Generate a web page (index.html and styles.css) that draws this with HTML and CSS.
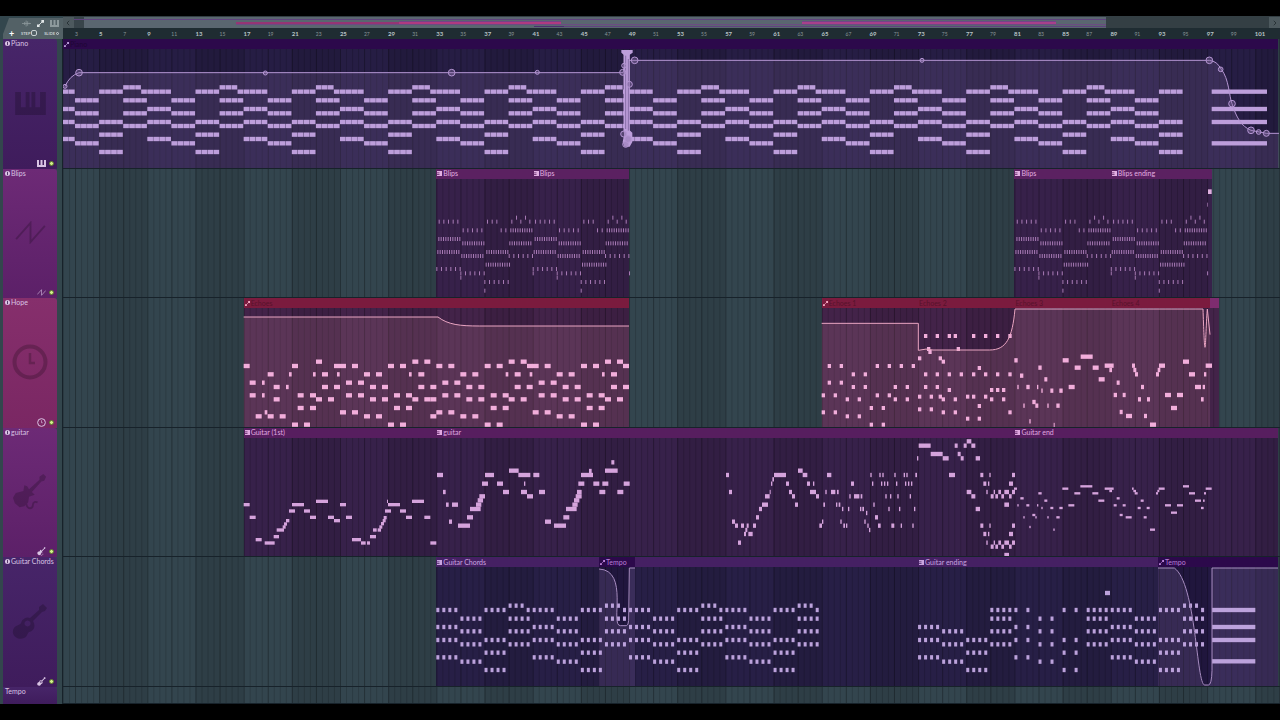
FILE: index.html
```html
<!DOCTYPE html>
<html lang="en">
<head>
  <meta charset="UTF-8">
  <meta name="viewport" content="width=device-width, initial-scale=1.0">
  <title>Playlist</title>
  <link rel="stylesheet" href="styles.css">
</head>
<body>
  <!-- Shared icons -->
  <svg class="icon-defs" aria-hidden="true">
    <symbol id="icon-piano" viewBox="0 0 32 24">
      <path fill="currentColor" d="M0 0h6v16h5V0h4v16h2V0h4v16h5V0h6v24H0z"/>
    </symbol>
    <symbol id="icon-piano-small" viewBox="0 0 9 7">
      <path fill="currentColor" d="M0 0h2v5h1.500V0h2v5H7V0h2v7H0z"/>
    </symbol>
    <symbol id="icon-wave" viewBox="0 0 32 24">
      <path fill="none" stroke="currentColor" stroke-width="2" d="M1 19 16 2v20L31 5"/>
    </symbol>
    <symbol id="icon-clock" viewBox="0 0 36 36">
      <circle cx="18" cy="18" r="15.500" fill="none" stroke="currentColor" stroke-width="4"/>
      <path fill="none" stroke="currentColor" stroke-width="2.500" d="M18 9v10h5"/>
    </symbol>
    <symbol id="icon-electric" viewBox="0 0 36 38">
      <path fill="currentColor" d="M35 3 32 0l-4 3v3L17 16l-2-3-3-1-1 6-8 2-3 5 2 6 5 4 5-1 4-4 1-6 6-2-3-3 10-11 3-1z"/>
      <path fill="none" stroke="currentColor" stroke-width="2" d="M14 31c1 7 7 6 7 2s3-4 5-3"/>
    </symbol>
    <symbol id="icon-acoustic" viewBox="0 0 36 36">
      <path fill="currentColor" fill-rule="evenodd" d="M35 4 31 0l-4 3v3l-9 8a7 7 0 0 0-9 5c-1 2-5 2-7 5-4 6 3 13 10 10 3-1 3-4 5-6 5-1 7-6 4-11l9-9 3-1zM15.500 16.500a3 3 0 1 0 .1 0z"/>
    </symbol>
    <symbol id="icon-link" viewBox="0 0 8 8">
      <path stroke="currentColor" d="M2 6 6 2"/>
      <path fill="currentColor" d="M0 5h3v3H0zM5 0h3v3H5z"/>
    </symbol>
    <symbol id="icon-pattern" viewBox="0 0 7 7">
      <path fill="currentColor" d="M0 0h7v7H0V5.500h3.500v-1H0V3h3.500V2H0z"/>
    </symbol>
    <symbol id="icon-info" viewBox="0 0 6 6">
      <circle cx="3" cy="3" r="3" fill="currentColor"/>
      <path stroke="#3a1a50" d="M3 1v4"/>
    </symbol>
    <symbol id="icon-audio" viewBox="0 0 12 8">
      <path stroke="currentColor" d="M0 4h12M3.500 2v4M5.500 0v8M7.500 1v6M9.500 3v2"/>
    </symbol>
  </svg>

  <main class="playlist">
    <header class="toolbar">
      <div class="corner">
        <div class="tools">
          <button class="tool" aria-label="Audio clips"><svg><use href="#icon-audio"/></svg></button>
          <button class="tool active" aria-label="Automation clips"><svg><use href="#icon-link"/></svg></button>
          <button class="tool" aria-label="Pattern clips"><svg><use href="#icon-piano-small"/></svg></button>
        </div>
        <div class="options">
          <button class="add" aria-label="Add track">+</button>
          <label>STEP<input type="checkbox"></label>
          <label>SLIDE<input type="checkbox" class="dot"></label>
        </div>
      </div>
      <div class="timeline-head">
        <nav class="overview">
          <button class="scroll" aria-label="Scroll left"><svg viewBox="0 0 6 8"><path d="M4 1 1 4l3 3"/></svg></button>
          <div class="minimap"><svg id="minimap"></svg></div>
          <button class="scroll" aria-label="Scroll right"><svg viewBox="0 0 6 8"><path d="m2 1 3 3-3 3"/></svg></button>
        </nav>
        <div class="ruler" id="ruler"></div>
      </div>
    </header>

    <section class="tracks">
      <div class="track violet">
        <div class="track-head">
          <h2><svg><use href="#icon-info"/></svg>Piano</h2>
          <svg class="mark"><use href="#icon-piano"/></svg>
          <div class="foot"><svg><use href="#icon-piano-small"/></svg><button class="led" aria-label="Mute Piano"></button></div>
        </div>
        <div class="lane" id="piano"></div>
      </div>
      <div class="track purple">
        <div class="track-head">
          <h2><svg><use href="#icon-info"/></svg>Blips</h2>
          <svg class="mark"><use href="#icon-wave"/></svg>
          <div class="foot"><svg><use href="#icon-wave"/></svg><button class="led" aria-label="Mute Blips"></button></div>
        </div>
        <div class="lane" id="blips"></div>
      </div>
      <div class="track pink">
        <div class="track-head">
          <h2><svg><use href="#icon-info"/></svg>Hope</h2>
          <svg class="mark big"><use href="#icon-clock"/></svg>
          <div class="foot"><svg><use href="#icon-clock"/></svg><button class="led" aria-label="Mute Hope"></button></div>
        </div>
        <div class="lane" id="hope"></div>
      </div>
      <div class="track purple">
        <div class="track-head">
          <h2><svg><use href="#icon-info"/></svg>guitar</h2>
          <svg class="mark big"><use href="#icon-electric"/></svg>
          <div class="foot"><svg><use href="#icon-electric"/></svg><button class="led" aria-label="Mute guitar"></button></div>
        </div>
        <div class="lane" id="guitar"></div>
      </div>
      <div class="track violet">
        <div class="track-head">
          <h2><svg><use href="#icon-info"/></svg>Guitar Chords</h2>
          <svg class="mark big"><use href="#icon-acoustic"/></svg>
          <div class="foot"><svg><use href="#icon-acoustic"/></svg><button class="led" aria-label="Mute Guitar Chords"></button></div>
        </div>
        <div class="lane" id="chords"></div>
      </div>
      <div class="track violet">
        <div class="track-head"><h2>Tempo</h2></div>
        <div class="lane" id="tempo"></div>
      </div>
    </section>
  </main>
  <script src="script.js"></script>
</body>
</html>
```
FILE: styles.css
```css
* {
  box-sizing: border-box;
}

body {
  margin: 0;
  background: #000;
  font-family: Lato, "Liberation Sans", sans-serif;
  color: #d9c4e4;
}

button {
  padding: 0;
  border: none;
  background: none;
  color: inherit;
  font: inherit;
}

.icon-defs {
  position: absolute;
  width: 0;
  height: 0;
}

.playlist {
  display: flex;
  flex-direction: column;
  height: 100vh;
  border: solid #000;
  border-width: 16px 0;
  background: #33464d;
  overflow: hidden;
}

/* Toolbar */
.toolbar {
  display: flex;
  height: 23px;
  flex: none;
}

.corner {
  width: 63px;
  padding: 2px 4px 0 9px;
  background: #536166;
  clip-path: polygon(9px 2px, 100% 2px, 100% 100%, 3px 100%, 3px 18px);
  color: #c8d0d2;
}

.tools {
  display: flex;
  justify-content: flex-end;
  align-items: center;
  gap: 5px;
  height: 10px;
}

.tool {
  display: flex;
  color: #8d999c;
}

.tool.active {
  color: #e3e8e9;
}

.tool svg {
  width: 9px;
  height: 7px;
}

.options {
  display: flex;
  align-items: center;
  justify-content: space-between;
  height: 10px;
  font-size: 4px;
  font-weight: bold;
}

.options label {
  display: flex;
  align-items: center;
}

.options .add {
  color: #fff;
  font-size: 9px;
  line-height: 9px;
}

.options input {
  appearance: none;
  width: 6px;
  height: 6px;
  margin: 0 0 0 1px;
  border: 1px solid #c8d0d2;
  border-radius: 2px;
}

.options .dot {
  width: 3px;
  height: 3px;
}

.timeline-head {
  flex: 1;
  min-width: 0;
}

.overview {
  display: flex;
  height: 12px;
  padding-top: 1px;
  background: #343f44;
}

.scroll {
  display: flex;
  align-items: center;
  justify-content: center;
  width: 11px;
  background: #4d595e;
}

.scroll svg {
  width: 5px;
  height: 6px;
  fill: none;
  stroke: #1d272b;
}

.minimap {
  flex: 1;
  overflow: hidden;
}

.minimap svg {
  display: block;
  width: 100%;
  height: 11px;
}

.ruler {
  display: flex;
  height: 11px;
  background: #1f2c32;
  overflow: hidden;
}

.ruler span {
  flex: none;
  color: #8a9699;
  font-size: 5px;
  line-height: 12px;
}

.ruler .major {
  color: #b9c4c7;
  font-size: 6px;
  font-weight: bold;
}

/* Tracks */
.tracks {
  display: grid;
  flex: 1;
  min-height: 0;
  grid-template-rows: repeat(5, 1fr) 17px;
}

.track {
  display: flex;
  min-height: 0;
}

.track-head {
  display: flex;
  flex-direction: column;
  justify-content: space-between;
  align-items: center;
  width: 54px;
  margin: 0 6px 0 3px;
  padding: 0 2px 1px;
  border-radius: 0 3px 0 0;
}

.violet .track-head {
  background: linear-gradient(#472569, #3f1c5c);
}

.purple .track-head {
  background: linear-gradient(#6d2a76, #5c2068);
}

.pink .track-head {
  background: linear-gradient(#862f6c, #7a2763);
}

.track-head h2 {
  display: flex;
  align-items: center;
  align-self: stretch;
  gap: 1px;
  margin: 0;
  font-size: 7px;
  font-weight: normal;
  line-height: 9px;
  white-space: nowrap;
}

.track-head h2 svg {
  flex: none;
  width: 5px;
  height: 5px;
}

.mark {
  width: 31px;
  height: 23px;
  color: #000;
  opacity: .2;
}

.mark.big {
  width: 36px;
  height: 36px;
}

.foot {
  display: flex;
  align-items: center;
  align-self: flex-end;
  gap: 3px;
}

.foot svg {
  width: 9px;
  height: 9px;
}

.led {
  width: 5px;
  height: 5px;
  margin-right: 1px;
  border: 1px solid #5d7a2c;
  border-radius: 50%;
  background: #d3f08c;
}

.lane {
  position: relative;
  flex: 1;
  min-width: 0;
  border-bottom: 1px solid #17222a;
  background: #33454e;
  box-shadow: -1px 0 #17222a;
  overflow: hidden;
}

/* Clips sit at their bar on the timeline */
.clip {
  position: absolute;
  top: 0;
  bottom: 0;
}

.clip-title {
  position: relative;
  z-index: 2;
  display: flex;
  align-items: center;
  gap: 1px;
  height: 10px;
  padding-left: 1px;
  font-size: 7px;
  line-height: 9px;
  white-space: nowrap;
}

.clip-title svg {
  width: 5px;
  height: 5px;
}

.clip.piano { background: #261d44; }
.clip.piano .clip-title { background: #2c094b; color: #b99ad8; }
.clip.blips { background: #37214a; }
.clip.blips .clip-title { background: #5b2161; color: #e3b0e2; }
.clip.hope { background: #432349; }
.clip.hope .clip-title { background: #7b1b3e; color: #f0a8c0; }
.clip.tail { background: #432349; }
.clip.tail .clip-title { background: #7e2c6f; }
.clip.guitar { background: #37214a; }
.clip.guitar .clip-title { background: #571e5f; color: #e0a8e0; }
.clip.chords { background: #271f46; }
.clip.chords .clip-title { background: #452063; color: #c9a5e0; }
.clip.tempo { background: #241944; }
.clip.tempo .clip-title { background: #2c094b; color: #b77fd6; }

.clip-title .dim {
  color: #000;
  opacity: .3;
}

.notes {
  position: absolute;
  inset: 0;
  width: 100%;
  height: 100%;
}

.band { fill: #000; opacity: .09; }
.half-line { fill: #000; opacity: .15; }
.bar-line { fill: #000; opacity: .3; }

.curve { fill: none; stroke-width: 3; }
.area { opacity: .14; }
.handle { fill: #8a6fa8; fill-opacity: .4; stroke-width: 3; }

#piano .note, #piano .area { fill: #bd9edb; }
#piano .curve, #piano .handle { stroke: #b596d3; }
#blips .note { fill: #a97bb6; }
#blips .note.bright { fill: #e0b0e0; }
#hope .note { fill: #f2aedb; }
#hope .area { fill: #f2a0b4; }
#hope .curve { stroke: #eaa5c2; }
#guitar .note { fill: #d5a3dc; }
#chords .note { fill: #bca2dc; }
#chords .area { fill: #c8a8e0; }
#chords .curve { stroke: #a78cc0; }
```
FILE: script.js
```js
// All note data is stored in thirds of a pixel, measured from bar 2.
const UNIT = 1 / 3;
const BAR = 36.13;
const LAST_BAR = 104;
const barX = (bar) => (bar - 2) * BAR;

function shape(parent, tag, attrs) {
  const el = document.createElementNS("http://www.w3.org/2000/svg", tag);
  for (const key in attrs) el.setAttribute(key, attrs[key]);
  parent.appendChild(el);
  return el;
}

function addClip(lane, type, start, end, title, icon) {
  const clip = document.createElement("div");
  clip.className = "clip " + type;
  clip.style.left = start * UNIT + "px";
  clip.style.width = (end - start) * UNIT + "px";
  const svg = icon ? `<svg><use href="#icon-${icon}"/></svg>` : "";
  const dim = type === "piano" || type === "hope" ? "dim" : "";
  clip.innerHTML = `<div class="clip-title">${svg}<span class="${dim}">${title}</span></div>`;
  document.getElementById(lane).appendChild(clip);
}

// Grid lines, then a group that the notes and curves go in
function addGrid(lane) {
  const svg = shape(document.getElementById(lane), "svg", { class: "notes" });
  const g = shape(svg, "g", { transform: `scale(${UNIT})` });
  for (let bar = 5; bar < LAST_BAR; bar += 8) {
    shape(g, "rect", { class: "band", x: barX(bar), y: 0, width: BAR * 4, height: 500 });
  }
  for (let bar = 2; bar < LAST_BAR; bar += 0.5) {
    const cls = bar % 1 === 0 && bar % 2 === 1 ? "bar-line" : "half-line";
    shape(g, "rect", { class: cls, x: barX(bar), y: 0, width: 3, height: 500 });
  }
  return g;
}

function note(g, x, w, y, h, cls) {
  shape(g, "rect", { class: "note " + (cls || ""), x: x, y: y - h / 2, width: w, height: h });
}

// "x,width,y" triples
function addNotes(g, dx, dy, h, text) {
  text.trim().split(/\s+/).forEach((item) => {
    const [x, w, y] = item.split(",").map(Number);
    note(g, x + dx, w, y + dy, h);
  });
}

// { y: [x, x, ...] } with one width
function addRows(g, dx, dy, w, h, rows) {
  for (const y in rows) rows[y].forEach((x) => note(g, x + dx, w, Number(y) + dy, h));
}

// Ruler
const ruler = document.getElementById("ruler");
ruler.style.paddingLeft = BAR * UNIT + "px";
for (let bar = 3; bar <= 101; bar += 2) {
  const label = document.createElement("span");
  label.textContent = bar;
  label.style.width = BAR * 2 * UNIT + "px";
  if (bar % 4 === 1) label.className = "major";
  ruler.appendChild(label);
}

// Minimap: x, y, width, height, colour
[
  [0, 0, 10, 11, "#38444a"], [10, 0, 1022, 11, "#5a6670"],
  [0, 2, 1032, 1, "#5f437e"], [162, 5, 324, 2, "#953574"], [325, 5, 162, 2, "#b03a80"],
  [728, 5, 254, 2, "#a8408a"], [325, 4, 162, 1, "#744488"], [728, 4, 254, 1, "#744488"],
  [162, 7, 870, 1, "#6b4c82"], [460, 9, 30, 1, "#4b2f70"], [490, 9, 542, 1, "#5f437e"]
].forEach(([x, y, width, height, fill]) => {
  shape(document.getElementById("minimap"), "rect", { x, y, width, height, fill });
});

// Piano
addClip("piano", "piano", 0, 3645, "Piano", "link");
const piano = addGrid("piano");
const pianoCurve = "M6 142Q20 110 48 101H1680L1690 64H3439Q3462 66 3475 91C3498 120 3498 170 3507 194C3520 235 3535 262 3564 274L3610 283H3648";
shape(piano, "path", { class: "area", d: pianoCurve + "V400H0V142Z" });
const pianoChords = [[158, 210, 249, 300], [184, 223, 261, 313], [158, 249, 287, 339], [184, 223, 261]];
for (let step = 0; step < 47; step++) {
  const x = barX(1 + step * 2);
  pianoChords[step % 4].forEach((y) => {
    for (let i = 0; i < 4; i++) note(piano, x + i * 18, 17, y, 13);
  });
  if (step % 4 === 3) {
    for (let i = 0; i < 3; i++) note(piano, x + i * 18, 17, 145, 13);
    note(piano, x + 54, 17, 158, 13);
  }
}
addNotes(piano, 2691, -87, 13, "755,166,245 755,166,297 755,166,336 755,166,400");
shape(piano, "path", { class: "curve", d: pianoCurve });
shape(piano, "path", { class: "note", opacity: 0.8, d: "M1681 44h20v236h-20z" });
shape(piano, "path", { class: "note", d: "M1675 33h34v8l-10 7v225l9 8v28l-8 14h-16l-5-14 4-20V48l-8-7z" });
shape(piano, "path", { d: "M1688 50v220M1696 60v215", stroke: "#6b548c", "stroke-width": 2 });
[
  [6, 142, 6], [48, 101, 10], [607, 102, 6], [1166, 101, 10], [1423, 100, 6], [1679, 100, 9],
  [1683, 80, 7], [1699, 136, 9], [1682, 285, 9], [1688, 316, 9], [1695, 300, 10], [1715, 64, 10],
  [2577, 64, 6], [3439, 64, 10], [3473, 91, 7], [3507, 194, 10], [3564, 274, 10], [3587, 279, 7], [3610, 283, 9]
].forEach(([cx, cy, r]) => shape(piano, "circle", { class: "handle", cx, cy, r }));

// Blips
addClip("blips", "blips", barX(33), barX(41), "Blips", "pattern");
addClip("blips", "blips", barX(41), barX(49), "Blips", "pattern");
addClip("blips", "blips", barX(81), barX(89), "Blips", "pattern");
addClip("blips", "blips", barX(89), 3446, "Blips ending", "pattern");
const blips = addGrid("blips");
// first x, count, step, y
const blipRuns = [
  [7, 5, 14, 158], [152, 3, 14, 158], [225, 3, 27, 158], [239, 2, 27, 146],
  [79, 5, 14, 184], [193, 2, 14, 184], [222, 10, 7, 184],
  [6, 10, 7, 210], [78, 10, 7, 223], [219, 10, 7, 223],
  [3, 10, 7, 249], [150, 10, 7, 249], [75, 10, 7, 261], [217, 6, 14, 261],
  [148, 11, 7, 287], [0, 6, 14, 300], [72, 6, 14, 313], [72, 1, 14, 326],
  [144, 6, 14, 339], [144, 1, 14, 365], [289, 1, 14, 313]
];
[33, 41, 81, 89].forEach((bar) => {
  blipRuns.forEach(([x, count, step, y]) => {
    for (let i = 0; i < count; i++) note(blips, barX(bar) + x + i * step, 3, y, 12);
  });
});
note(blips, 3432, 2, 107, 12);
note(blips, 3435, 11, 68, 14, "bright");

// Hope
addClip("hope", "hope", barX(17), barX(49), "Echoes", "link");
addClip("hope", "hope", barX(65), barX(73), "Echoes 1", "link");
addClip("hope", "hope", barX(73), barX(81), "Echoes 2");
addClip("hope", "hope", barX(81), barX(89), "Echoes 3");
addClip("hope", "hope", barX(89), 3441, "Echoes 4");
addClip("hope", "tail", 3441, 3468, "");
const hope = addGrid("hope");
const hopeCurves = [
  "M542 57H1125C1155 80 1190 84 1250 84H1698",
  "M2276 76H2566V157Q2590 150 2610 156H2780C2830 156 2848 120 2856 33H3420C3422 90 3424 148 3426 148S3430 60 3433 33L3441 110"
];
shape(hope, "path", { class: "area", d: hopeCurves[0] + "V400H542Z" });
shape(hope, "path", { class: "area", d: hopeCurves[1] + "V400H2276Z" });
addRows(hope, 531, -25, 18, 13, {
  216: [228, 517, 553, 806, 842, 1095, 1131],
  229: [11, 156, 282, 300, 336, 444, 480, 589, 625, 734, 770, 861, 878, 914, 1023, 1059, 1149],
  254: [83, 246, 372, 408, 535, 661, 697, 824, 950, 986, 1113],
  279: [29, 318, 354, 607, 643, 896, 932],
  292: [101, 246, 282, 390, 426, 535, 571, 679, 715, 824, 860, 968, 1004, 1113, 1149],
  317: [29, 173, 210, 318, 354, 462, 498, 607, 643, 752, 788, 896, 932, 1040, 1076],
  329: [101, 228, 264, 390, 426, 517, 553, 571, 679, 715, 806, 842, 968, 1004, 1095, 1131],
  355: [173, 210, 462, 498, 752, 788, 1040, 1076],
  368: [300, 336, 589, 625, 878, 914],
  380: [47, 83, 119, 372, 408, 571, 661, 697, 950, 986],
  405: [156, 192, 444, 480, 734, 770, 1023, 1059]
});
addRows(hope, 531, -25, 8, 13, {
  254: [147, 219, 291, 507, 797, 869, 1086], 279: [66], 292: [138], 317: [66], 368: [74]
});
addRows(hope, 2251, -25, 10, 12, {
  139: [332, 367, 403, 421, 476, 512, 548, 585],
  178: [341, 430], 187: [345], 206: [314, 376], 216: [385],
  229: [43, 79, 187, 223, 259, 295], 235: [493],
  254: [115, 151, 332, 367, 403, 439, 476, 512, 548, 585],
  279: [43, 79], 292: [115, 151, 241, 277, 332, 367],
  301: [403, 530, 548, 566], 317: [25, 61, 187, 223],
  321: [314, 349, 376, 458, 476, 512], 329: [97, 133, 241, 277, 385, 421, 530, 566],
  349: [493], 355: [169, 205], 359: [314, 349], 368: [25, 61, 385, 421, 585],
  380: [97, 133], 387: [458, 493], 405: [169, 205]
});
addNotes(hope, 2826, -400, 13, `
  28,10,587 45,10,633 37,4,667 64,10,667 55,4,723 82,10,712 91,9,723 73,4,770 100,10,609 96,4,667
  109,4,678 118,9,644 127,4,723 136,9,678 146,3,781 154,10,723 163,10,678 173,18,587 191,18,667
  209,18,609 227,36,576 263,18,609 281,18,644 299,27,603 313,8,616 326,10,691 335,9,654 344,9,742
  353,9,691 363,18,754 381,9,603 385,9,616 390,9,629 399,9,704 408,9,667 417,9,754 426,9,704
  435,18,780 453,9,629 458,8,616 462,18,603 480,18,691 498,18,730 516,18,691 534,18,591 552,18,629
  570,18,667 588,8,704 593,7,667 597,7,629 602,19,603`);
hopeCurves.forEach((d) => shape(hope, "path", { class: "curve", d }));

// Guitar
addClip("guitar", "guitar", barX(17), barX(33), "Guitar (1st)", "pattern");
addClip("guitar", "guitar", barX(33), barX(81), "guitar", "pattern");
addClip("guitar", "guitar", barX(81), 3645, "Guitar end", "pattern");
const guitar = addGrid("guitar");
addNotes(guitar, 531, -8, 10, `
  11,18,238 29,18,276 47,18,343 74,30,353 101,16,334 110,22,314 128,9,305 132,9,296 138,10,286
  147,18,257 156,36,238 192,18,257 210,18,276 228,36,228 264,18,276 282,18,286 300,18,238
  318,18,276 336,27,343 363,14,353 381,9,353 390,18,334 399,11,314 413,10,314 418,9,305 423,9,295
  428,9,286 431,9,277 435,18,257 444,36,238 441,3,228 480,18,257 498,18,276 516,36,228 553,18,276
  571,18,353`);
addNotes(guitar, 531, -8, 13, `
  591,18,149 609,8,200 618,8,238 636,18,238 627,9,289 654,36,301 681,18,276 690,32,251 708,16,238
  713,16,225 718,17,213 726,18,175 735,27,149 771,18,175 789,18,200 807,29,136 835,36,149
  852,4,175 843,18,200 861,18,213 880,18,149 897,18,200 915,18,289 942,36,301 970,18,276
  978,32,251 997,16,238 1002,16,225 1007,18,213 1011,14,200 1015,18,175 1023,36,149 1047,8,137
  1060,18,175 1078,18,200 1087,18,175 1095,38,136 1114,9,111 1132,18,200 1151,18,175`);
addNotes(guitar, 1956, -8, 13, `
  33,9,149 42,9,200 51,9,289 60,9,301 69,9,352 78,9,301 87,6,326 91,6,314 95,6,301 100,13,326
  114,9,301 123,9,276 132,9,251 141,18,238 150,14,213 164,3,200 168,4,175 172,5,162 177,36,149
  213,9,175 222,9,200 231,9,213 240,9,238 249,14,136 263,14,149 276,9,175 294,4,175 285,18,200
  303,9,213 313,8,301 321,4,289 325,5,238 331,4,200 336,13,149 348,13,200 366,5,200 363,4,238
  371,5,238 376,4,289 381,4,251 385,5,301 393,4,301 399,4,251 403,4,213 408,9,175 417,16,213
  437,5,213 435,4,251 442,5,251 448,4,289 453,4,263 457,4,301 462,4,314 466,4,149 471,4,175
  475,4,238 480,9,276 489,8,301 493,4,149 502,4,149 498,4,175 507,4,175 516,4,175 511,4,213
  525,4,213 520,4,251 529,9,301 538,4,149 543,4,175 547,4,213 552,4,251 557,4,301 566,4,149
  574,4,149 570,4,175 579,4,175 588,4,175 584,4,213 592,4,301 597,4,251 601,5,149 606,4,99
  611,36,61 647,36,86 683,18,99 702,18,149 719,9,61 728,9,86 737,9,99 746,9,61 755,14,48
  769,12,61 782,13,99 755,14,200 769,12,213 782,13,251 796,9,149 796,9,301 805,9,175 805,9,326
  819,4,175 819,4,326 823,4,149 823,4,301 814,4,200 814,4,352 827,9,213 827,9,364 836,4,200
  836,4,352 841,8,213 841,8,364 850,8,200 850,8,352 859,8,213 859,8,364 868,14,200 868,14,352
  882,8,213 882,8,364 868,14,238 868,14,389 882,12,175 882,12,326 891,9,149 891,9,301 891,9,200
  891,9,352`);
addNotes(guitar, 1956, -8, 7, `
  897,9,190 907,4,240 916,10,219 925,4,276 934,9,240 943,4,305 952,9,269 961,4,276 970,10,204
  966,4,240 979,4,248 988,9,226 997,4,276 1006,9,248 1015,4,313 1024,10,276 1033,10,248
  1042,18,190 1060,18,240 1078,18,204 1096,36,183 1132,18,204 1150,18,226 1169,27,190 1183,8,197
  1196,9,240 1205,9,219 1214,9,269 1223,9,240 1232,18,276 1251,5,190 1255,8,197 1259,9,204
  1268,9,248 1277,9,226 1286,9,276 1295,9,248 1305,15,313 1323,6,204 1327,6,197 1331,18,190
  1350,18,240 1368,18,262 1386,18,240 1404,18,183 1422,18,204 1440,18,226 1458,8,248 1464,5,226
  1467,6,204 1472,18,190`);

// Guitar chords
addClip("chords", "chords", barX(33), barX(73), "Guitar Chords", "pattern");
addClip("chords", "chords", barX(73), 3645, "Guitar ending", "pattern");
addClip("chords", "tempo", 1608, 1716, "Tempo", "link");
addClip("chords", "tempo", 3285, 3645, "Tempo", "link");
const chords = addGrid("chords");
const tempoCurves = [
  "M1608 36C1700 40 1640 206 1672 206H1690Q1696 206 1697 190L1699 33H1716",
  "M3285 33H3334C3400 80 3400 384 3425 384H3436Q3446 384 3447 340V33H3645"
];
shape(chords, "path", { class: "area", d: tempoCurves[0] + "V400H1608Z" });
shape(chords, "path", { class: "area", d: tempoCurves[1] + "V400H3285Z" });
const chordRows = [[159, 210, 249, 301], [185, 223, 262, 314], [159, 249, 287, 339], [185, 223, 262]];
function addChord(bar, rows, count, gap) {
  rows.forEach((y) => {
    for (let i = 0; i < count; i++) note(chords, barX(bar) + i * gap, 9, y, 13);
  });
}
for (let step = 0; step < 16; step++) {
  const bar = 33 + step * 2;
  addChord(bar, chordRows[step % 4], 4, 18);
  if (step % 4 === 3) {
    addChord(bar, [146], 3, 18);
    addChord(bar + 1.5, [159], 1, 18);
  }
}
// The ending thins out in its middle eight bars
addChord(73, [210, 249, 301], 4, 18);
addChord(75, [223, 262, 314], 4, 18);
addChord(77, [249, 287, 339], 4, 18);
addChord(79, [159, 185, 223, 262], 4, 18);
addChord(81, chordRows[0], 2, 36);
addChord(83, chordRows[1], 2, 36);
addChord(85, chordRows[2], 2, 36);
addChord(87, [159, 185, 223, 262], 4, 18);
addChord(89, chordRows[0], 4, 18);
addChord(91, chordRows[1], 4, 18);
addChord(93, chordRows[2], 4, 18);
addChord(95, chordRows[3], 4, 18);
addChord(95, [146], 3, 18);
addChord(96.5, [159], 1, 18);
addNotes(chords, 0, 0, 13, "3447,130,159 3447,130,210 3447,130,249 3447,130,313 3126,15,108");
tempoCurves.forEach((d) => shape(chords, "path", { class: "curve", d }));

addGrid("tempo");
```
